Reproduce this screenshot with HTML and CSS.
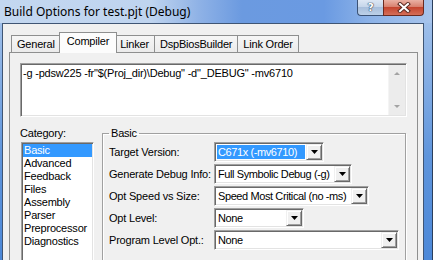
FILE: index.html
```html
<!DOCTYPE html>
<html>
  <head>
    <meta charset="UTF-8" />
    <title>Build Options for test.pjt (Debug)</title>
    <link rel="stylesheet" href="styles.css">
  </head>
  <body>
    <div class="window">
      <div class="titlebar">
        <span class="title">Build Options for test.pjt (Debug)</span>
        <div class="caption">
          <div class="cap-btn help">?</div>
          <div class="cap-btn close">
            <svg width="14" height="11" viewBox="0 0 14 11">
              <path d="M3 2 L11 9 M11 2 L3 9" stroke="#5a2a22" stroke-width="4" stroke-linecap="square" />
              <path d="M3 2 L11 9 M11 2 L3 9" stroke="#fff" stroke-width="2" stroke-linecap="square" />
            </svg>
          </div>
        </div>
      </div>
      <div class="client">
        <div class="tabs">
          <div class="tab">General</div>
          <div class="tab active">Compiler</div>
          <div class="tab">Linker</div>
          <div class="tab">DspBiosBuilder</div>
          <div class="tab">Link Order</div>
        </div>
        <div class="panel">
          <div class="cmdline sunken">
            <div class="cmd-text">-g -pdsw225 -fr"$(Proj_dir)\Debug" -d"_DEBUG" -mv6710</div>
            <div class="vscroll">
              <div class="sb-btn"><span class="arrow-up"></span></div>
              <div class="sb-btn"><span class="arrow-down"></span></div>
            </div>
          </div>
          <div class="lower">
            <div class="category">
              <div class="cat-label">Category:</div>
              <ul class="listbox sunken">
                <li class="selected">Basic</li>
                <li>Advanced</li>
                <li>Feedback</li>
                <li>Files</li>
                <li>Assembly</li>
                <li>Parser</li>
                <li>Preprocessor</li>
                <li>Diagnostics</li>
              </ul>
            </div>
            <fieldset class="group">
              <legend>Basic</legend>
              <div class="form">
                <label>Target Version:</label>
                <div class="combo sunken w1">
                  <span class="value highlighted">C671x (-mv6710)</span>
                  <span class="drop"><svg width="7" height="4"><polygon points="0,0 7,0 3.5,4" fill="#000" /></svg></span>
                </div>
                <label>Generate Debug Info:</label>
                <div class="combo sunken w2">
                  <span class="value">Full Symbolic Debug (-g)</span>
                  <span class="drop"><svg width="7" height="4"><polygon points="0,0 7,0 3.5,4" fill="#000" /></svg></span>
                </div>
                <label>Opt Speed vs Size:</label>
                <div class="combo sunken w3">
                  <span class="value">Speed Most Critical (no -ms)</span>
                  <span class="drop"><svg width="7" height="4"><polygon points="0,0 7,0 3.5,4" fill="#000" /></svg></span>
                </div>
                <label>Opt Level:</label>
                <div class="combo sunken w4">
                  <span class="value">None</span>
                  <span class="drop"><svg width="7" height="4"><polygon points="0,0 7,0 3.5,4" fill="#000" /></svg></span>
                </div>
                <label>Program Level Opt.:</label>
                <div class="combo sunken w5">
                  <span class="value">None</span>
                  <span class="drop"><svg width="7" height="4"><polygon points="0,0 7,0 3.5,4" fill="#000" /></svg></span>
                </div>
              </div>
            </fieldset>
          </div>
        </div>
      </div>
    </div>
  </body>
</html>
```

FILE: styles.css
```css
* {
  box-sizing: border-box;
}

body {
  margin: 0;
  width: 433px;
  height: 260px;
  overflow: hidden;
  font-family: "Liberation Sans", Arial, sans-serif;
  font-size: 11px;
  letter-spacing: -0.2px;
  color: #000;
  background: linear-gradient(180deg, #a9c6ec, #5f95dc 60%, #4c88d8);
  border-right: 1px solid #2b3f5c;
}

.window {
  height: 260px;
  display: flex;
  flex-direction: column;
}

.titlebar {
  height: 23px;
  flex: none;
  display: flex;
  justify-content: space-between;
  align-items: flex-start;
  padding-right: 8px;
  background: linear-gradient(90deg, #c3d7f0 0, #bfd4ef 35%, #8fb2e6 46%, #6b9ae0 56%, #6a9ae2 75%, #8db3e8 86%, #a7c4ec 100%);
}

.title {
  padding: 4px 0 0 4px;
  font-family: "Noto Sans", "Open Sans", sans-serif;
  font-size: 12px;
  letter-spacing: 0;
  line-height: 15px;
  color: #000;
}

.caption {
  display: flex;
}

.cap-btn {
  height: 16px;
  display: flex;
  align-items: center;
  justify-content: center;
  border: 1px solid #3b5275;
  border-top: none;
}

.help {
  width: 26px;
  border-right: none;
  border-radius: 0 0 0 4px;
  background: linear-gradient(180deg, #dde7f4, #c6d6ea 45%, #a9bfdc 50%, #bcd0e8);
  color: #fff;
  font-family: "DejaVu Sans", sans-serif;
  font-weight: bold;
  font-size: 11px;
  text-shadow: 0 0 1px #2f405a, 0 0 1px #2f405a, 0 0 1px #2f405a;
}

.close {
  width: 41px;
  border-color: #6a2a20;
  border-radius: 0 0 4px 0;
  background: linear-gradient(180deg, #eab1a4, #d8816f 45%, #c5452f 50%, #d46e58);
}

.client {
  flex: 1;
  margin: 0 8px 0 2px;
  border: 1px solid #3f5574;
  border-bottom: none;
  background: #f0f0f0;
  padding: 8px 5px 0 6px;
}

.tabs {
  display: flex;
  align-items: flex-end;
  height: 21px;
  padding-left: 2px;
  margin-bottom: -1px;
  position: relative;
  z-index: 1;
}

.tab {
  height: 17px;
  margin-bottom: 1px;
  padding: 2px 5px 0;
  margin-left: -1px;
  border: 1px solid #8e8f8f;
  border-bottom: none;
  background: linear-gradient(180deg, #f6f6f6, #ebebeb);
  line-height: 13px;
}

.tab:first-child {
  margin-left: 0;
}

.tab.active {
  height: 21px;
  margin: 0 -2px;
  padding: 2px 7px 0;
  background: #fcfcfc;
  position: relative;
  z-index: 2;
}

.panel {
  height: 220px;
  border: 1px solid #8e8f8f;
  border-bottom: none;
  background: #f0f0f0;
  padding: 10px;
}

.sunken {
  border: 1px solid;
  border-color: #a0a0a0 #fff #fff #a0a0a0;
  box-shadow: inset 1px 1px 0 #696969, inset -1px -1px 0 #e3e3e3;
  padding: 1px;
  background: #fff;
}

.cmdline {
  height: 54px;
  display: flex;
}

.cmd-text {
  flex: 1;
  padding: 2px 0 0 1px;
  line-height: 13px;
  white-space: nowrap;
}

.vscroll {
  width: 17px;
  display: flex;
  flex-direction: column;
  justify-content: space-between;
  background: #ececec;
  border-left: 1px solid #f4f4f4;
}

.sb-btn {
  height: 17px;
  display: flex;
  align-items: center;
  justify-content: center;
}

.arrow-up {
  border-left: 3px solid transparent;
  border-right: 3px solid transparent;
  border-bottom: 3px solid #a3a3a3;
}

.arrow-down {
  border-left: 3px solid transparent;
  border-right: 3px solid transparent;
  border-top: 3px solid #a3a3a3;
}

.lower {
  display: flex;
  margin-top: 10px;
}

.category {
  width: 74px;
  flex: none;
}

.cat-label {
  line-height: 13px;
  height: 15px;
}

.listbox {
  list-style: none;
  margin: 0 0 0 1px;
  height: 130px;
  padding: 1px;
}

.listbox li {
  height: 13px;
  line-height: 13px;
  padding-left: 1px;
}

.listbox li.selected {
  background: #3399ff;
  color: #fff;
}

.group {
  flex: 1;
  margin: 0 1px 0 8px;
  padding: 2px 6px 10px;
  border: 1px solid #a0a0a0;
  box-shadow: inset 1px 1px 0 #fff, 1px 1px 0 #fff;
}

.group legend {
  padding: 0 2px;
  line-height: 13px;
}

.form {
  display: grid;
  grid-template-columns: 105px auto;
  row-gap: 2px;
  align-items: center;
  justify-items: start;
}

.form label {
  white-space: nowrap;
}

.combo {
  height: 20px;
  display: flex;
  align-items: stretch;
}

.combo .value {
  flex: 1;
  margin: 1px;
  padding-left: 1px;
  line-height: 14px;
  letter-spacing: -0.4px;
  white-space: nowrap;
  overflow: hidden;
}

.combo .value.highlighted {
  background: #3399ff;
  color: #fff;
}

.drop {
  width: 16px;
  flex: none;
  display: flex;
  align-items: center;
  justify-content: center;
  background: #f0f0f0;
  border: 1px solid;
  border-color: #f0f0f0 #696969 #696969 #f0f0f0;
  box-shadow: inset 1px 1px 0 #fff, inset -1px -1px 0 #a0a0a0;
}

.w1 { width: 110px; }
.w2 { width: 138px; }
.w3 { width: 155px; }
.w4 { width: 90px; }
.w5 { width: 185px; }
```
